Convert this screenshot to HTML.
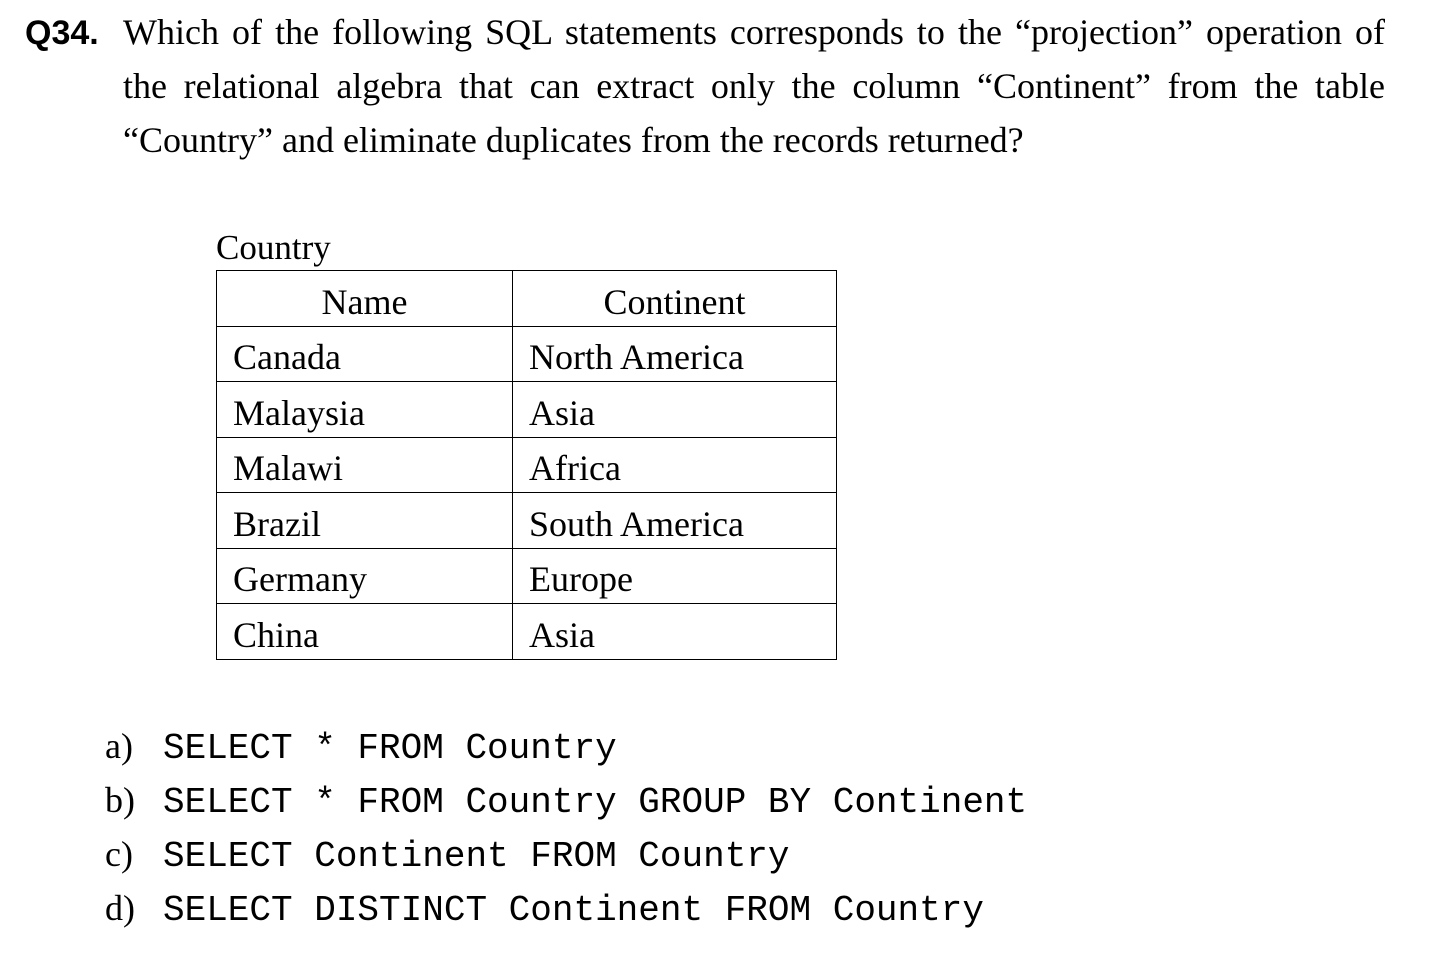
<!DOCTYPE html>
<html><head><meta charset="utf-8"><style>
body{margin:0;width:1450px;height:958px;background:#fff;position:relative;font-family:"Liberation Serif",serif;color:#000;overflow:hidden}
.q{position:absolute;left:25px;top:14px;font:bold 34px "Liberation Sans",sans-serif}
.p{position:absolute;left:123px;width:1262px;font-size:36px;text-align:left;white-space:nowrap}
.l{position:absolute;left:123px;width:1262px;font-size:36px;text-align:justify;text-align-last:justify;white-space:nowrap}
.cap{position:absolute;left:216px;top:228px;font-size:35px}
table{position:absolute;left:216px;top:270px;border-collapse:collapse;font-size:36px;table-layout:fixed}
td{border:1.5px solid #000;height:55.5px;padding:7px 0 0 16px;box-sizing:border-box;line-height:1}
th{border:1.5px solid #000;height:55.5px;font-weight:normal;padding:7px 0 0 0;box-sizing:border-box}
.o{position:absolute;left:105px;font-size:36px}
.o span{font:36px "Liberation Mono",monospace;position:absolute;left:58px;top:3px;white-space:pre}
</style></head><body>
<div class="q">Q34.</div>
<div class="l" style="top:11px">Which of the following SQL statements corresponds to the “projection” operation of</div>
<div class="l" style="top:65px">the relational algebra that can extract only the column “Continent” from the table</div>
<div class="p" style="top:119px">“Country” and eliminate duplicates from the records returned?</div>
<div class="cap">Country</div>
<table>
<tr><th style="width:296px">Name</th><th style="width:324px">Continent</th></tr>
<tr><td>Canada</td><td>North America</td></tr>
<tr><td>Malaysia</td><td>Asia</td></tr>
<tr><td>Malawi</td><td>Africa</td></tr>
<tr><td>Brazil</td><td>South America</td></tr>
<tr><td>Germany</td><td>Europe</td></tr>
<tr><td>China</td><td>Asia</td></tr>
</table>
<div class="o" style="top:725px">a)<span>SELECT * FROM Country</span></div>
<div class="o" style="top:779px">b)<span>SELECT * FROM Country GROUP BY Continent</span></div>
<div class="o" style="top:833px">c)<span>SELECT Continent FROM Country</span></div>
<div class="o" style="top:887px">d)<span>SELECT DISTINCT Continent FROM Country</span></div>
</body></html>
